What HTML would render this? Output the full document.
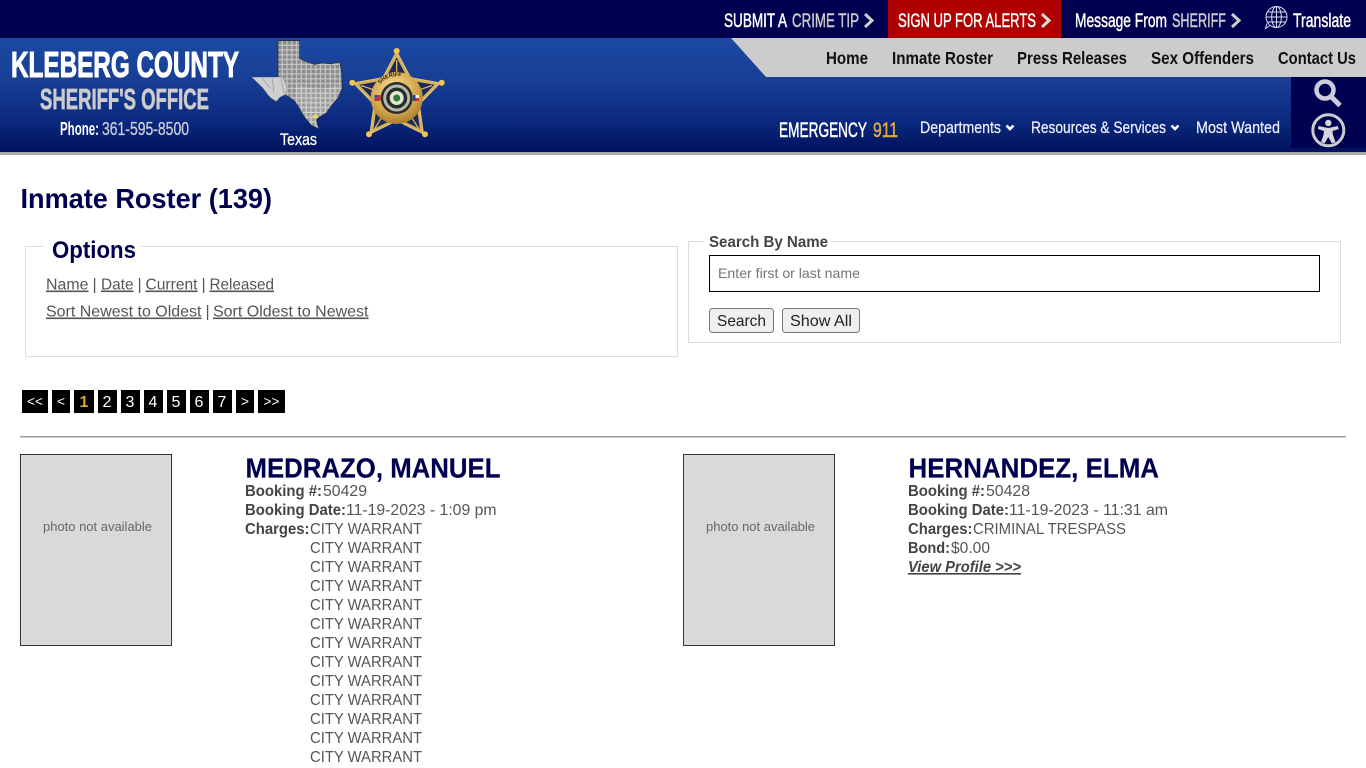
<!DOCTYPE html>
<html lang="en">
<head>
<meta charset="utf-8">
<title>Inmate Roster - Kleberg County Sheriff's Office</title>
<style>
html,body{margin:0;padding:0;width:1366px;height:768px;overflow:hidden;background:#fff}
svg{display:block}
text{font-family:"Liberation Sans",Arial,sans-serif;white-space:pre}
.b{font-weight:bold}
.top{font-size:19px;fill:#fff;stroke:#fff;stroke-width:.45px}
.dim{fill:#ccc;stroke:#ccc}
.nav{font-size:17.5px;font-weight:bold;fill:#111}
.sub{font-size:16.5px;fill:#eef;stroke:#eef;stroke-width:.25px}
.t{font-size:16px;fill:#555}
.l{font-size:16px;fill:#444;font-weight:bold}
.u{text-decoration:underline}
.nm{font-size:28px;font-weight:bold;fill:#000050;stroke:#000050;stroke-width:.2px}
.pg{font-size:16px;fill:#fff;text-anchor:middle}
.ph{font-size:13px;fill:#666}
</style>
</head>
<body>
<svg width="1366" height="768" viewBox="0 0 1366 768" xmlns="http://www.w3.org/2000/svg">
<defs>
<linearGradient id="hd" x1="0" y1="0" x2="0" y2="1">
<stop offset="0" stop-color="#1c49a2"/><stop offset=".35" stop-color="#183f96"/><stop offset=".7" stop-color="#0c2b80"/><stop offset="1" stop-color="#00125e"/>
</linearGradient>
<pattern id="grid" width="4.8" height="4.8" patternUnits="userSpaceOnUse" x="278" y="41">
<rect width="4.8" height="4.8" fill="#c6c6c6"/><rect x="0" y="0" width="3.6" height="3.6" fill="#8c8c8c"/>
</pattern>
<radialGradient id="gold" cx=".45" cy=".35" r=".7">
<stop offset="0" stop-color="#f8e6a4"/><stop offset=".6" stop-color="#d6a94e"/><stop offset="1" stop-color="#a0742a"/>
</radialGradient>
<path id="arc" d="M375 98 A21.700 21.700 0 0 1 418.400 98"/>
</defs>

<!-- header backgrounds -->
<rect width="1366" height="38" fill="#000050"/>
<rect x="888" width="173" height="38" fill="#b00000"/>
<rect y="38" width="1366" height="114" fill="url(#hd)"/>
<rect y="152" width="1366" height="3" fill="#aaa"/>
<polygon points="731,38 1366,38 1366,77 766,77" fill="#ccc"/>
<rect x="1291" y="77" width="75" height="71" fill="#000050"/>

<!-- top bar -->
<text class="top" x="724" y="27" textLength="63" lengthAdjust="spacingAndGlyphs">SUBMIT A</text>
<text class="top dim" x="792" y="27" textLength="67" lengthAdjust="spacingAndGlyphs">CRIME TIP</text>
<polyline points="865,14 872,20.500 865,27" fill="none" stroke="#ccc" stroke-width="3"/>
<text class="top" x="898" y="27" textLength="138" lengthAdjust="spacingAndGlyphs">SIGN UP FOR ALERTS</text>
<polyline points="1042,14 1049,20.500 1042,27" fill="none" stroke="#ddd" stroke-width="3"/>
<text class="top" x="1075" y="27" textLength="92" lengthAdjust="spacingAndGlyphs">Message From</text>
<text class="top dim" x="1172" y="27" textLength="54" lengthAdjust="spacingAndGlyphs">SHERIFF</text>
<polyline points="1232,14 1239,20.500 1232,27" fill="none" stroke="#ccc" stroke-width="3"/>
<g fill="none" stroke="#dde" stroke-width="1">
<circle cx="1276.500" cy="17" r="10.500"/>
<ellipse cx="1276.500" cy="17" rx="4.800" ry="10.500"/>
<path d="M1276.500 6.500V27.500M1267.500 12H1285.500M1266 17H1287M1267.500 22H1285.500"/>
<path d="M1270 25.500L1265.500 28.500L1267 23.500" fill="#000050"/>
</g>
<text class="top" x="1293" y="27" textLength="58" lengthAdjust="spacingAndGlyphs">Translate</text>

<!-- gray nav -->
<text class="nav" x="826" y="64" textLength="42" lengthAdjust="spacingAndGlyphs">Home</text>
<text class="nav" x="892" y="64" textLength="101" lengthAdjust="spacingAndGlyphs">Inmate Roster</text>
<text class="nav" x="1017" y="64" textLength="110" lengthAdjust="spacingAndGlyphs">Press Releases</text>
<text class="nav" x="1151" y="64" textLength="103" lengthAdjust="spacingAndGlyphs">Sex Offenders</text>
<text class="nav" x="1278" y="64" textLength="78" lengthAdjust="spacingAndGlyphs">Contact Us</text>

<!-- sub nav -->
<text x="779" y="137" font-size="21" fill="#fff" stroke="#fff" stroke-width=".5" textLength="88" lengthAdjust="spacingAndGlyphs">EMERGENCY</text>
<text x="873" y="137" font-size="21" fill="#e2a93b" stroke="#e2a93b" stroke-width=".5" textLength="25" lengthAdjust="spacingAndGlyphs">911</text>
<text class="sub" x="920" y="133" textLength="81" lengthAdjust="spacingAndGlyphs">Departments</text>
<polyline points="1006.500,125.500 1010,129 1013.500,125.500" fill="none" stroke="#fff" stroke-width="2.600"/>
<text class="sub" x="1031" y="133" textLength="135" lengthAdjust="spacingAndGlyphs">Resources &amp; Services</text>
<polyline points="1171.500,125.500 1175,129 1178.500,125.500" fill="none" stroke="#fff" stroke-width="2.600"/>
<text class="sub" x="1196" y="133" textLength="84" lengthAdjust="spacingAndGlyphs">Most Wanted</text>

<!-- search + accessibility icons -->
<circle cx="1325" cy="90" r="8.500" fill="none" stroke="#ccd" stroke-width="4.500"/>
<line x1="1331.500" y1="97" x2="1340" y2="105.500" stroke="#ccd" stroke-width="5"/>
<circle cx="1328.300" cy="130.300" r="15.500" fill="none" stroke="#ccc" stroke-width="3"/>
<circle cx="1328.300" cy="123" r="3.200" fill="#d5d5e0"/>
<path d="M1318.500 126L1328.300 128L1338 126L1338.700 129L1332.500 131L1333 135L1335.500 142L1332 143.500L1328.300 137L1324.500 143.500L1321 142L1323.500 135L1324 131L1318 129Z" fill="#d5d5e0"/>

<!-- logo text -->
<text class="b" x="11" y="77" font-size="36" fill="#fff" stroke="#fff" stroke-width="1" textLength="228" lengthAdjust="spacingAndGlyphs">KLEBERG COUNTY</text>
<text class="b" x="40" y="109" font-size="29" fill="#ccc" stroke="#ccc" stroke-width=".7" textLength="169" lengthAdjust="spacingAndGlyphs">SHERIFF'S OFFICE</text>
<text class="b" x="60" y="135" font-size="18.500" fill="#fff" textLength="39" lengthAdjust="spacingAndGlyphs">Phone:</text>
<text x="102" y="135" font-size="18.500" fill="#ccd" stroke="#ccd" stroke-width=".3" textLength="87" lengthAdjust="spacingAndGlyphs">361-595-8500</text>
<text x="280" y="145" font-size="16.500" fill="#fff" stroke="#fff" stroke-width=".3" textLength="37" lengthAdjust="spacingAndGlyphs">Texas</text>

<!-- Texas -->
<path d="M278 40.700H299.700V58.700L307 62L314.700 64.500L322 63L331 64L339.700 62L341.500 72L342.300 88L338 98L331 106L326.300 113L319 117L316.300 119.700L317.500 125L319 128.700L311.300 125.300L306 119L303 114.700L299 107L294.700 101.300L289 97L284.700 94.700L280 97L276.300 101.300L271 98L268 94.700L263 88L259.700 84.700L252 77.300H278Z" fill="url(#grid)" stroke="#222" stroke-width=".6"/>
<path d="M252 77.300H283L287 88L284.700 94.700L280 97L276.300 101.300L271 98L268 94.700L263 88L259.700 84.700Z" fill="#cfcfcf" stroke="#999" stroke-width=".5"/>
<path d="M262 78L270 88M272 78L274 92M281 78L284 93" stroke="#8a8a8a" stroke-width=".6" fill="none"/>
<path d="M296 85L322 90L340 84L338 97L326 113L316.300 119.700L319 128.700L311.300 125.300L303 114.700L294.700 101.300Z" fill="#fff" opacity=".16"/>
<rect x="313" y="115" width="5" height="3" fill="#e6e23e"/>

<!-- Badge -->
<polygon points="396.700,51 410.800,77.600 440.500,82.800 419.500,104.400 423.700,134.200 396.700,121 369.700,134.200 373.900,104.400 352.900,82.800 382.600,77.600" fill="#d8b25a" stroke="#efd48a" stroke-width=".6"/>
<polygon transform="translate(396.700,97) scale(.86) translate(-396.700,-97)" points="396.700,51 410.800,77.600 440.500,82.800 419.500,104.400 423.700,134.200 396.700,121 369.700,134.200 373.900,104.400 352.900,82.800 382.600,77.600" fill="#1b2a5a"/>
<path d="M396.700 60V80M361 85.500L380 92M419 129L408 112M374.500 129L385 112M432 85.500L413 92" stroke="#d8b25a" stroke-width="1.300" fill="none"/>
<g fill="#f4c64f"><circle cx="396.700" cy="51" r="3"/><circle cx="352.300" cy="82.700" r="3"/><circle cx="441.700" cy="82.700" r="3"/><circle cx="369" cy="134.300" r="3"/><circle cx="425" cy="134.300" r="3"/></g>
<circle cx="396.700" cy="98" r="26" fill="url(#gold)"/>
<rect x="374.500" y="95" width="6" height="6" fill="#c33"/><rect x="374.500" y="95" width="3" height="3" fill="#35a"/>
<rect x="413" y="95" width="6" height="6" fill="#eee"/><rect x="413" y="95" width="2.500" height="6" fill="#24a"/><rect x="415.500" y="98" width="3.500" height="3" fill="#c33"/>
<text font-size="5.500" font-weight="bold" fill="#2a1c08"><textPath href="#arc" startOffset="15">SHERIFF</textPath></text>
<circle cx="396.700" cy="98" r="16" fill="#2c2c2c"/>
<circle cx="396.700" cy="98" r="13.500" fill="#b9b9a9"/>
<circle cx="396.700" cy="98" r="10.500" fill="#23302a"/>
<circle cx="396.700" cy="98" r="7" fill="#e8e6d0"/>
<circle cx="396.700" cy="98" r="3.500" fill="#2f7a3e"/>

<!-- page heading -->
<text class="b" x="20.500" y="208" font-size="28" fill="#000050" textLength="251.500" lengthAdjust="spacingAndGlyphs">Inmate Roster (139)</text>

<!-- options -->
<rect x="25.500" y="246.500" width="652" height="110" fill="none" stroke="#ddd"/>
<rect x="44" y="240" width="97" height="12" fill="#fff"/>
<text class="b" x="52" y="258" font-size="24" fill="#000050" textLength="84" lengthAdjust="spacingAndGlyphs">Options</text>
<text class="t u" x="46" y="289.500" textLength="42.500" lengthAdjust="spacingAndGlyphs">Name</text>
<text class="t" x="92.500" y="289.500">|</text>
<text class="t u" x="101" y="289.500" textLength="32.500" lengthAdjust="spacingAndGlyphs">Date</text>
<text class="t" x="137.500" y="289.500">|</text>
<text class="t u" x="145.500" y="289.500" textLength="52" lengthAdjust="spacingAndGlyphs">Current</text>
<text class="t" x="201.500" y="289.500">|</text>
<text class="t u" x="209.500" y="289.500" textLength="64.500" lengthAdjust="spacingAndGlyphs">Released</text>
<text class="t u" x="46" y="316.500" textLength="155.500" lengthAdjust="spacingAndGlyphs">Sort Newest to Oldest</text>
<text class="t" x="205.500" y="316.500">|</text>
<text class="t u" x="213" y="316.500" textLength="155.500" lengthAdjust="spacingAndGlyphs">Sort Oldest to Newest</text>

<!-- search -->
<rect x="688.500" y="241.500" width="652" height="101" fill="none" stroke="#ddd"/>
<rect x="704" y="236" width="128" height="12" fill="#fff"/>
<text class="l" x="709" y="247" textLength="119" lengthAdjust="spacingAndGlyphs">Search By Name</text>
<rect x="709.500" y="255.500" width="610" height="36" fill="#fff" stroke="#000" stroke-width="1"/>
<text x="718" y="278" font-size="14" fill="#757575" textLength="142" lengthAdjust="spacingAndGlyphs">Enter first or last name</text>
<rect x="709.500" y="308.500" width="64" height="24" rx="3" fill="#efefef" stroke="#767676"/>
<text x="717" y="326" font-size="16" fill="#222" textLength="49" lengthAdjust="spacingAndGlyphs">Search</text>
<rect x="782.500" y="308.500" width="77" height="24" rx="3" fill="#efefef" stroke="#767676"/>
<text x="790" y="326" font-size="16" fill="#222" textLength="62" lengthAdjust="spacingAndGlyphs">Show All</text>

<!-- pagination -->
<g fill="#000">
<rect x="22" y="390" width="26" height="23"/><rect x="52" y="390" width="18" height="23"/><rect x="74" y="390" width="20" height="23"/><rect x="98" y="390" width="19" height="23"/><rect x="121" y="390" width="19" height="23"/><rect x="144" y="390" width="19" height="23"/><rect x="167" y="390" width="19" height="23"/><rect x="190" y="390" width="19" height="23"/><rect x="213" y="390" width="19" height="23"/><rect x="236" y="390" width="18" height="23"/><rect x="258" y="390" width="27" height="23"/>
</g>
<text class="pg" x="35" y="406" style="font-size:14px" textLength="16" lengthAdjust="spacingAndGlyphs">&lt;&lt;</text>
<text class="pg" x="61" y="406" style="font-size:14px">&lt;</text>
<text class="pg b" x="84" y="407" style="fill:#e0a91f">1</text>
<text class="pg" x="107" y="407">2</text>
<text class="pg" x="130" y="407">3</text>
<text class="pg" x="153" y="407">4</text>
<text class="pg" x="176" y="407">5</text>
<text class="pg" x="199" y="407">6</text>
<text class="pg" x="222" y="407">7</text>
<text class="pg" x="245" y="406" style="font-size:14px">&gt;</text>
<text class="pg" x="271.500" y="406" style="font-size:14px" textLength="16" lengthAdjust="spacingAndGlyphs">&gt;&gt;</text>

<rect x="20" y="436" width="1326" height="1.500" fill="#999"/>

<!-- record 1 -->
<rect x="20.500" y="454.500" width="151" height="191" fill="#d9d9d9" stroke="#333"/>
<text class="ph" x="43" y="531" textLength="109" lengthAdjust="spacingAndGlyphs">photo not available</text>
<text class="nm" x="245.500" y="477.500" textLength="255" lengthAdjust="spacingAndGlyphs">MEDRAZO, MANUEL</text>
<text class="l" x="245" y="496" textLength="77" lengthAdjust="spacingAndGlyphs">Booking #:</text>
<text class="t" x="323" y="496" textLength="44" lengthAdjust="spacingAndGlyphs">50429</text>
<text class="l" x="245" y="515" textLength="101" lengthAdjust="spacingAndGlyphs">Booking Date:</text>
<text class="t" x="346" y="515" textLength="150.500" lengthAdjust="spacingAndGlyphs">11-19-2023 - 1:09 pm</text>
<text class="l" x="245" y="534" textLength="64.500" lengthAdjust="spacingAndGlyphs">Charges:</text>
<text class="t" x="310" y="534" textLength="112" lengthAdjust="spacingAndGlyphs">CITY WARRANT</text>
<text class="t" x="310" y="553" textLength="112" lengthAdjust="spacingAndGlyphs">CITY WARRANT</text>
<text class="t" x="310" y="572" textLength="112" lengthAdjust="spacingAndGlyphs">CITY WARRANT</text>
<text class="t" x="310" y="591" textLength="112" lengthAdjust="spacingAndGlyphs">CITY WARRANT</text>
<text class="t" x="310" y="610" textLength="112" lengthAdjust="spacingAndGlyphs">CITY WARRANT</text>
<text class="t" x="310" y="629" textLength="112" lengthAdjust="spacingAndGlyphs">CITY WARRANT</text>
<text class="t" x="310" y="648" textLength="112" lengthAdjust="spacingAndGlyphs">CITY WARRANT</text>
<text class="t" x="310" y="667" textLength="112" lengthAdjust="spacingAndGlyphs">CITY WARRANT</text>
<text class="t" x="310" y="686" textLength="112" lengthAdjust="spacingAndGlyphs">CITY WARRANT</text>
<text class="t" x="310" y="705" textLength="112" lengthAdjust="spacingAndGlyphs">CITY WARRANT</text>
<text class="t" x="310" y="724" textLength="112" lengthAdjust="spacingAndGlyphs">CITY WARRANT</text>
<text class="t" x="310" y="743" textLength="112" lengthAdjust="spacingAndGlyphs">CITY WARRANT</text>
<text class="t" x="310" y="762" textLength="112" lengthAdjust="spacingAndGlyphs">CITY WARRANT</text>

<!-- record 2 -->
<rect x="683.500" y="454.500" width="151" height="191" fill="#d9d9d9" stroke="#333"/>
<text class="ph" x="706" y="531" textLength="109" lengthAdjust="spacingAndGlyphs">photo not available</text>
<text class="nm" x="908.500" y="477.500" textLength="250.500" lengthAdjust="spacingAndGlyphs">HERNANDEZ, ELMA</text>
<text class="l" x="908" y="496" textLength="77" lengthAdjust="spacingAndGlyphs">Booking #:</text>
<text class="t" x="986" y="496" textLength="44" lengthAdjust="spacingAndGlyphs">50428</text>
<text class="l" x="908" y="515" textLength="101" lengthAdjust="spacingAndGlyphs">Booking Date:</text>
<text class="t" x="1009" y="515" textLength="159" lengthAdjust="spacingAndGlyphs">11-19-2023 - 11:31 am</text>
<text class="l" x="908" y="534" textLength="64.500" lengthAdjust="spacingAndGlyphs">Charges:</text>
<text class="t" x="973" y="534" textLength="153" lengthAdjust="spacingAndGlyphs">CRIMINAL TRESPASS</text>
<text class="l" x="908" y="553" textLength="42" lengthAdjust="spacingAndGlyphs">Bond:</text>
<text class="t" x="951" y="553" textLength="39" lengthAdjust="spacingAndGlyphs">$0.00</text>
<text class="l u" x="908" y="572" font-style="italic" textLength="113" lengthAdjust="spacingAndGlyphs">View Profile &gt;&gt;&gt;</text>
</svg>
</body>
</html>
